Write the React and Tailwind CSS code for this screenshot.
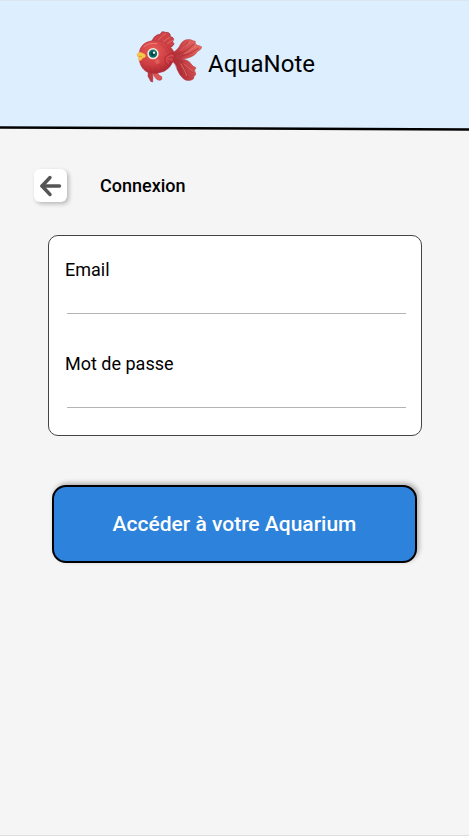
function Goldfish() {
  return (
    <svg className="h-16 w-[66px] shrink-0" viewBox="18 0 198 192" aria-hidden="true">
      <defs>
        <radialGradient id="body" cx="0.38" cy="0.3" r="0.75">
          <stop offset="0" stopColor="#e65b57" />
          <stop offset="0.6" stopColor="#cf3e43" />
          <stop offset="1" stopColor="#a5242f" />
        </radialGradient>
        <linearGradient id="tail" x1="0" y1="0.6" x2="1" y2="0.1">
          <stop offset="0" stopColor="#a82631" />
          <stop offset="0.5" stopColor="#d04a4c" />
          <stop offset="1" stopColor="#ec7469" />
        </linearGradient>
      </defs>
      <path d="M66 48Q74 28 91 28Q94 16 106 22Q122 21 121 35Q131 36 131 44Q124 49 132 56Q131 63 120 67Q98 54 66 48Z" fill="#cd4247" stroke="#9c2630" strokeWidth="2" />
      <path d="M83 47Q94 33 108 25M99 51Q109 42 121 36M111 57Q121 48 130 45" fill="none" stroke="#ef7c6c" strokeWidth="2" />
      <path d="M55 142Q51 155 59 162Q60 171 68 171Q70 155 67 145Z" fill="#c23940" stroke="#9c2630" strokeWidth="1.5" />
      <path d="M68 145Q78 167 90 166Q98 164 95 155Q87 153 82 143Z" fill="#dc5653" stroke="#a82c35" strokeWidth="1.5" />
      <path d="M127 83Q143 77 152 57Q162 41 182 44Q189 48 196 49Q193 57 202 61Q212 63 216 67Q212 75 203 79Q195 92 182 96Q171 101 157 102Q178 106 184 118Q190 126 198 128Q190 137 197 144Q199 151 192 154Q193 163 184 165Q170 170 160 161Q148 151 141 133Q138 116 126 109Z" fill="url(#tail)" stroke="#b5363d" strokeWidth="1.5" />
      <path d="M138 88Q156 81 174 49M143 91Q169 81 193 56M146 96Q178 91 207 69M139 103Q151 118 157 151M145 103Q162 119 174 158M151 104Q169 119 189 143" fill="none" stroke="#a52f38" strokeWidth="2.5" />
      <path d="M151 78Q163 65 181 50M163 86Q183 76 198 63M152 116Q166 137 171 153M161 115Q175 128 188 139" fill="none" stroke="#f0877a" strokeWidth="2.5" opacity="0.75" />
      <path d="M28 92Q25 72 40 58Q60 43 86 48Q116 53 130 77Q138 91 130 108Q121 129 103 139Q80 149 55 143Q34 134 28 108Z" fill="url(#body)" stroke="#b5363d" strokeWidth="1.5" />
      <path d="M91 57Q108 66 112 83M109 62Q119 73 123 88M88 119Q96 130 94 139M72 123Q81 132 80 142M55 121Q66 132 65 142" fill="none" stroke="#a4303a" strokeWidth="2" opacity="0.6" />
      <path d="M104 97Q115 84 132 84Q129 90 135 92Q129 101 132 107Q127 113 120 111Q117 121 109 117Q103 110 104 97Z" fill="#c4373f" stroke="#9f2832" strokeWidth="1.5" />
      <path d="M108 99Q118 91 129 91M108 103Q118 99 128 105M108 107Q113 109 116 116" fill="none" stroke="#df6560" strokeWidth="2" />
      <path d="M42 65Q58 52 80 56" fill="none" stroke="#f28177" strokeWidth="3" strokeLinecap="round" />
      <circle cx="82" cy="110" r="7" fill="#ed7770" opacity="0.5" />
      <circle cx="69" cy="86" r="17" fill="#f7ede3" />
      <circle cx="69" cy="86" r="12.5" fill="#087069" />
      <circle cx="69" cy="86" r="6.5" fill="#034047" />
      <circle cx="72" cy="83" r="3.5" fill="#fff" />
      <path d="M22 86Q30 79 37 84Q47 87 47 94Q45 99 38 99Q36 106 29 107Q22 104 28 98Q18 93 22 86Z" fill="#f7c94d" stroke="#e8a63b" strokeWidth="1.5" />
      <path d="M27 94L36 94" stroke="#c77b27" strokeWidth="2" />
    </svg>
  );
}

function Field({ id, label, type, autoComplete, className }) {
  return (
    <div className={className}>
      <label htmlFor={id} className="block text-lg leading-6">{label}</label>
      <input
        id={id}
        type={type}
        autoComplete={autoComplete}
        className="ml-0.5 block h-8 w-[calc(100%-2px)] border-b border-[#b3b3b3] bg-transparent text-lg outline-none"
      />
    </div>
  );
}

export default function App() {
  return (
    <div className="flex min-h-screen flex-col border-b border-[#dedede] bg-[#f5f5f5] font-['Roboto',sans-serif] text-black">
      <header className="border-t border-[#dce6f1] bg-[#ddeeff]">
        <div className="flex h-[125px] items-start justify-center gap-1.5 pt-6 pr-[18px]">
          <Goldfish />
          <span className="pt-[23px] text-2xl leading-8">AquaNote</span>
        </div>
        <svg className="block h-[5px] w-full" viewBox="0 0 469 5" preserveAspectRatio="none" aria-hidden="true">
          <path d="M0 1L469 3V5H0Z" fill="#f5f5f5" />
          <path d="M0 1.5L469 3.5" stroke="#000" strokeWidth="2.5" />
        </svg>
      </header>

      <main>
        <div className="flex items-center gap-[33px] px-[34px] pt-[38px]">
          <button type="button" aria-label="Retour" className="flex size-[33px] items-center justify-center rounded-md bg-white shadow-[2px_2px_4px_rgba(0,0,0,0.25)]">
            <svg className="size-6" viewBox="0 0 24 24" fill="none" stroke="#555" strokeWidth="3.4" strokeLinecap="round" strokeLinejoin="round" aria-hidden="true">
              <path d="M11 3.5L3 12L11 20.5" />
              <path d="M3 12H20.5" />
            </svg>
          </button>
          <h1 className="text-lg leading-6 font-medium">Connexion</h1>
        </div>

        <form onSubmit={(event) => event.preventDefault()}>
          <div className="mr-[47px] ml-12 mt-[33px] rounded-[10px] border border-[#444] bg-white pt-[22px] pr-[15px] pb-[27px] pl-4">
            <Field id="email" label="Email" type="email" autoComplete="email" />
            <Field id="password" label="Mot de passe" type="password" autoComplete="current-password" className="mt-[38px]" />
          </div>
          <div className="mt-[49px] px-[52px]">
            <button type="submit" className="h-[78px] w-full rounded-[14px] border-2 border-black bg-[#2d82db] text-[21px] leading-6 font-medium text-white shadow-[2px_-2px_5px_rgba(0,0,0,0.3)]">
              Accéder à votre Aquarium
            </button>
          </div>
        </form>
      </main>
    </div>
  );
}
